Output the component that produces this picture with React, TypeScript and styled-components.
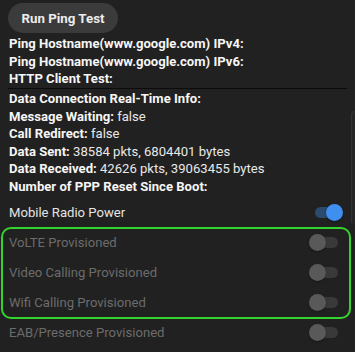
import React from "react";
import styled, { createGlobalStyle } from "styled-components";

const Global = createGlobalStyle`
  html, body { margin: 0; padding: 0; background: #212121; }
  * { box-sizing: border-box; }
`;

const Page = styled.div`
  position: relative;
  width: 355px;
  height: 352px;
  overflow: hidden;
  background: #212121;
  font-family: Roboto, "Noto Sans", sans-serif;
  color: #f2f2f2;
`;

const Button = styled.button`
  display: flex;
  align-items: center;
  justify-content: center;
  margin: 3px 0 2px 8px;
  height: 30px;
  width: 110px;
  border: none;
  border-radius: 15px;
  background: #3b3b3b;
  color: #ececec;
  font-family: Roboto, "Noto Sans", sans-serif;
  font-weight: 700;
  font-size: 13.3px;
  padding: 0;
`;

const Info = styled.div`
  display: flex;
  flex-direction: column;
`;

const Line = styled.div`
  padding-left: 9px;
  font-size: 13.1px;
  line-height: 17.6px;
  font-weight: 700;
  color: #f6f6f6;
  white-space: nowrap;
`;

const Value = styled.span`
  font-weight: 400;
  color: #e8e8e8;
`;

const Divider = styled.div`
  height: 1px;
  margin: 0 8px 1.2px 8px;
  background: #0c0c0c;
`;

const Rows = styled.div`
  display: flex;
  flex-direction: column;
  margin-top: 2px;
`;

const Row = styled.div<{ $disabled?: boolean }>`
  display: flex;
  align-items: center;
  justify-content: space-between;
  height: 30px;
  padding: 0 12px 0 9px;
  font-size: 13.1px;
  color: ${(p) => (p.$disabled ? "#6c6c6c" : "#e4e4e4")};
`;

const Highlight = styled.div`
  position: relative;
  &::after {
    content: "";
    position: absolute;
    left: 1px;
    right: 4px;
    top: -1px;
    bottom: -1px;
    border: 2px solid #34d42f;
    border-radius: 10px;
    pointer-events: none;
  }
`;

const Switch = styled.div`
  position: relative;
  width: 34px;
  height: 17px;
  flex: none;
`;

const Track = styled.div<{ $on?: boolean }>`
  position: absolute;
  left: 5.5px;
  right: 5.5px;
  top: 3px;
  height: 11px;
  border-radius: 6px;
  background: ${(p) => (p.$on ? "#2c4a6c" : "#393939")};
`;

const Thumb = styled.div<{ $on?: boolean }>`
  position: absolute;
  top: 0;
  left: ${(p) => (p.$on ? "17px" : "0")};
  width: 17px;
  height: 17px;
  border-radius: 50%;
  background: ${(p) => (p.$on ? "#3f8ff0" : "#595959")};
  box-shadow: 0 1px 2px rgba(0, 0, 0, 0.35);
`;

const Scroll = styled.div`
  position: absolute;
  right: 0;
  top: 111px;
  width: 4px;
  height: 112px;
  background: #262626;
  border-left: 1px solid #333;
  border-top: 1px solid #333;
  border-top-left-radius: 4px;
`;

const Toggle = ({ on }: { on?: boolean }) => (
  <Switch>
    <Track $on={on} />
    <Thumb $on={on} />
  </Switch>
);

export default function App() {
  return (
    <Page>
      <Global />
      <Button>Run Ping Test</Button>
      <Info>
        <Line>Ping Hostname(www.google.com) IPv4:</Line>
        <Line>Ping Hostname(www.google.com) IPv6:</Line>
        <Line>HTTP Client Test:</Line>
        <Divider />
        <Line>Data Connection Real-Time Info:</Line>
        <Line>
          Message Waiting: <Value>false</Value>
        </Line>
        <Line>
          Call Redirect: <Value>false</Value>
        </Line>
        <Line>
          Data Sent: <Value>38584 pkts, 6804401 bytes</Value>
        </Line>
        <Line>
          Data Received: <Value>42626 pkts, 39063455 bytes</Value>
        </Line>
        <Line>Number of PPP Reset Since Boot:</Line>
      </Info>
      <Rows>
        <Row>
          Mobile Radio Power
          <Toggle on />
        </Row>
        <Highlight>
          <Row $disabled>
            VoLTE Provisioned
            <Toggle />
          </Row>
          <Row $disabled>
            Video Calling Provisioned
            <Toggle />
          </Row>
          <Row $disabled>
            Wifi Calling Provisioned
            <Toggle />
          </Row>
        </Highlight>
        <Row $disabled>
          EAB/Presence Provisioned
          <Toggle />
        </Row>
      </Rows>
      <Scroll />
    </Page>
  );
}
